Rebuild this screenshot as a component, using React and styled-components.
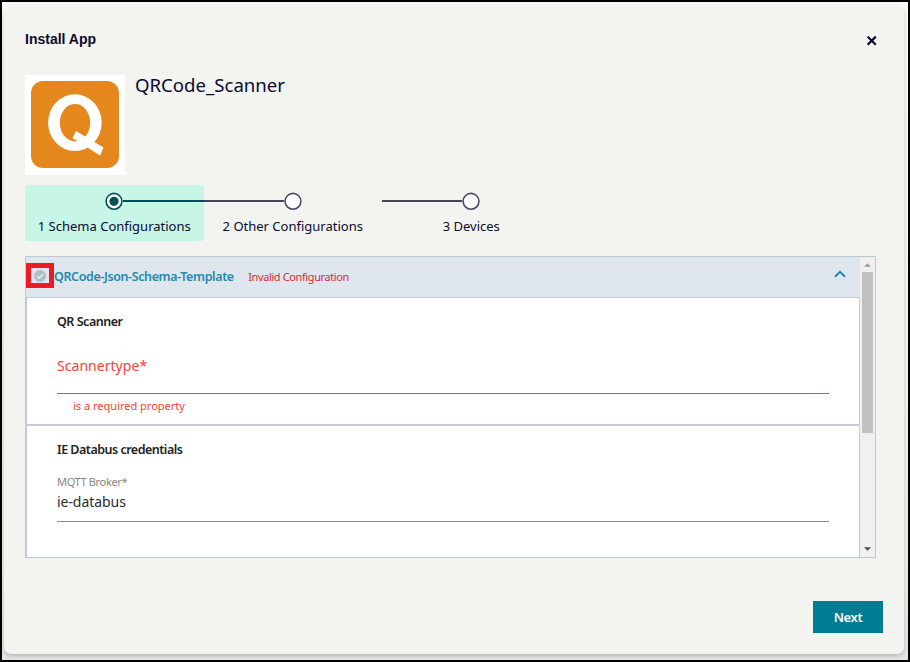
import React from "react";
import styled, { createGlobalStyle } from "styled-components";

const Global = createGlobalStyle`
  * { box-sizing: border-box; }
  body { margin: 0; background: #000; font-family: "Noto Sans", sans-serif; color: #0a0a33; }
`;

const Frame = styled.div`
  width: 910px;
  height: 662px;
  border: 2px solid #000;
  background: linear-gradient(#fdfdfc, #f1f1f0 85%, #e6e6e6);
  padding: 3px 4px 6px 2px;
  overflow: hidden;
`;

const Dialog = styled.div`
  height: 649px;
  background: #f3f4ef;
  border-radius: 7px;
  box-shadow: 0 2px 5px rgba(0, 0, 0, 0.22);
  padding: 24px 21px 0;
  display: flex;
  flex-direction: column;
`;

const TitleBar = styled.header`
  display: flex;
  justify-content: space-between;
  align-items: flex-start;
  height: 46px;
  padding-right: 6px;
`;

const Title = styled.h1`
  margin: 0;
  padding-top: 2px;
  font: bold 14px/16px "Liberation Sans", sans-serif;
`;

const CloseButton = styled.button`
  border: 0;
  padding: 0;
  margin-top: 7px;
  background: none;
  width: 10px;
  height: 10px;
  display: flex;
`;

const AppSummary = styled.section`
  display: flex;
  gap: 10px;
  height: 110px;
`;

const AppLogo = styled.div`
  width: 100px;
  height: 100px;
  background: #fff;
`;

const Label = styled.span`
  display: block;
  white-space: nowrap;
  flex: none;
  font-size: ${(p) => p.$size}px;
  line-height: ${(p) => p.$line || 20}px;
  font-weight: ${(p) => p.$weight || 400};
  letter-spacing: ${(p) => p.$track || 0}px;
  color: ${(p) => p.$color || "inherit"};
`;

const Warning = styled(Label)`
  margin-left: 14.5px;
`;

const Stepper = styled.ol`
  list-style: none;
  margin: 0;
  padding: 0;
  height: 71px;
  display: flex;
`;

const Step = styled.li`
  width: 178.5px;
  height: 56px;
  border-radius: 3px;
  background: ${(p) => (p.$active ? "#c8f6e6" : "transparent")};
  display: flex;
  flex-direction: column;
  align-items: center;
  padding-top: 7px;
  gap: 6px;
`;

const Track = styled.div`
  width: 100%;
  height: 18px;
  display: grid;
  grid-template-columns: 1fr 18px 1fr;
  align-items: center;
`;

const Connector = styled.span`
  height: 2px;
  background: ${(p) => p.$color || "transparent"};
`;

const Panel = styled.section`
  width: 851px;
  height: 302px;
  border: 1px solid #bdcad6;
  display: flex;
  overflow: hidden;
`;

const PanelBody = styled.div`
  width: 834px;
  display: flex;
  flex-direction: column;
`;

const PanelHeader = styled.div`
  height: 40px;
  flex: none;
  background: #dfe6ee;
  display: flex;
  align-items: center;
  padding: 0 14px 0 0;
`;

const StatusBox = styled.span`
  width: 28px;
  height: 25px;
  border: 5px solid #ec1c24;
  margin: -3px 0 0 0;
  display: flex;
  align-items: center;
  justify-content: center;
`;

const Chevron = styled.svg`
  margin: -7px 0 0 auto;
`;

const Group = styled.div`
  height: ${(p) => p.$height}px;
  flex: none;
  background: #fff;
  border: solid #c1cdd8;
  border-width: ${(p) => p.$top}px 1px 0 1px;
  padding: 14px 30px 0 30px;
`;

const Field = styled.div`
  height: ${(p) => p.$height}px;
  margin-top: ${(p) => p.$gap}px;
  border-bottom: 1px solid ${(p) => (p.$invalid ? "#f0443c" : "#8d8d8d")};
`;

const ErrorText = styled.div`
  padding: 2px 16px 0;
`;

const Scrollbar = styled.div`
  width: 15px;
  background: #f0f0f1;
  display: flex;
  flex-direction: column;
  align-items: center;
`;

const Arrow = styled.svg`
  flex: none;
  margin: ${(p) => (p.$down ? "auto 0 6px 0" : "6px 0 5px 0")};
`;

const Thumb = styled.span`
  width: 11px;
  height: 161px;
  background: #c0c0c0;
`;

const Footer = styled.footer`
  display: flex;
  justify-content: flex-end;
  padding-top: 43px;
`;

const NextButton = styled.button`
  width: 70px;
  height: 32px;
  border: 0;
  padding: 0;
  background: #007c93;
  color: #fff;
  font-family: inherit;
  display: flex;
  align-items: center;
  justify-content: center;
`;

const Node = ({ active }) => (
  <svg width="18" height="18" viewBox="0 0 18 18">
    <circle cx="9" cy="9.3" r="7.9" fill="#fff" stroke={active ? "#00505a" : "#4d4a68"} strokeWidth="1.6" />
    {active && <circle cx="9" cy="9.3" r="4.6" fill="#00505a" />}
  </svg>
);

export default function App() {
  return (
    <>
      <Global />
      <Frame>
        <Dialog>
          <TitleBar>
            <Title>Install App</Title>
            <CloseButton aria-label="Close">
              <svg width="10" height="10" viewBox="0 0 10 10">
                <path d="M.6.6 8.8 8.8M8.8.6.6 8.8" stroke="#0a0a33" strokeWidth="2.2" />
              </svg>
            </CloseButton>
          </TitleBar>
          <AppSummary>
            <AppLogo>
              <svg width="100" height="100" viewBox="0 0 100 100">
                <rect x="6" y="6" width="88" height="87" rx="12" fill="#e4881d" />
                <path
                  fill="#fff"
                  fillRule="evenodd"
                  d="M23.1 47.7a26.8 28.4 0 1 1 53.6 0a26.8 28.4 0 1 1-53.6 0ZM34.8 47.7a15.2 18.8 0 1 0 30.4 0a15.2 18.8 0 1 0-30.4 0Z"
                />
                <path fill="#fff" d="M51 56 78.5 72.5 75 80.5 47.5 63Z" />
              </svg>
            </AppLogo>
            <Label $size={18.6} $line={20}>QRCode_Scanner</Label>
          </AppSummary>
          <Stepper>
            <Step $active>
              <Track><Connector /><Node active /><Connector $color="#00505a" /></Track>
              <Label $size={13}>1 Schema Configurations</Label>
            </Step>
            <Step>
              <Track><Connector $color="#45445f" /><Node /><Connector /></Track>
              <Label $size={13}>2 Other Configurations</Label>
            </Step>
            <Step>
              <Track><Connector $color="#45445f" /><Node /><Connector /></Track>
              <Label $size={13}>3 Devices</Label>
            </Step>
          </Stepper>
          <Panel>
            <PanelBody>
              <PanelHeader>
                <StatusBox>
                  <svg width="12" height="12" viewBox="0 0 12 12">
                    <circle cx="6" cy="6" r="6" fill="#b0bec8" />
                    <path d="m3 6 2.1 2.2L9.2 4" fill="none" stroke="#e5ebf1" strokeWidth="1.6" />
                  </svg>
                </StatusBox>
                <Label $size={12.5} $weight={600} $track={-0.39} $color="#248aad">QRCode-Json-Schema-Template</Label>
                <Warning $size={11} $track={-0.39} $color="#d92c32">Invalid Configuration</Warning>
                <Chevron width="12" height="8" viewBox="0 0 12 8">
                  <path d="m1 6.8 5-5 5 5" fill="none" stroke="#248aad" strokeWidth="2" />
                </Chevron>
              </PanelHeader>
              <Group $height={127} $top={1}>
                <Label $size={12.5} $weight={600} $track={-0.48} $color="#222">QR Scanner</Label>
                <Field $height={50} $gap={12} $invalid>
                  <Label $size={14} $line={44} $track={0.04} $color="#f44336">Scannertype*</Label>
                </Field>
                <ErrorText><Label $size={11} $color="#f44336">is a required property</Label></ErrorText>
              </Group>
              <Group $height={133} $top={2}>
                <Label $size={12.5} $weight={600} $track={-0.5} $color="#222">IE Databus credentials</Label>
                <Field $height={48} $gap={14}>
                  <Label $size={11} $line={16} $track={-0.35} $color="#858585">MQTT Broker*</Label>
                  <Label $size={14} $line={24} $track={-0.05} $color="#2b2b2b">ie-databus</Label>
                </Field>
              </Group>
            </PanelBody>
            <Scrollbar>
              <Arrow width="7" height="4" viewBox="0 0 8 4"><path d="M0 4 4 0 8 4Z" fill="#9c9c9c" /></Arrow>
              <Thumb />
              <Arrow $down width="7" height="4" viewBox="0 0 8 4"><path d="M0 0 4 4 8 0Z" fill="#4c4c4c" /></Arrow>
            </Scrollbar>
          </Panel>
          <Footer>
            <NextButton><Label $size={13} $weight={600} $track={-0.4}>Next</Label></NextButton>
          </Footer>
        </Dialog>
      </Frame>
    </>
  );
}
